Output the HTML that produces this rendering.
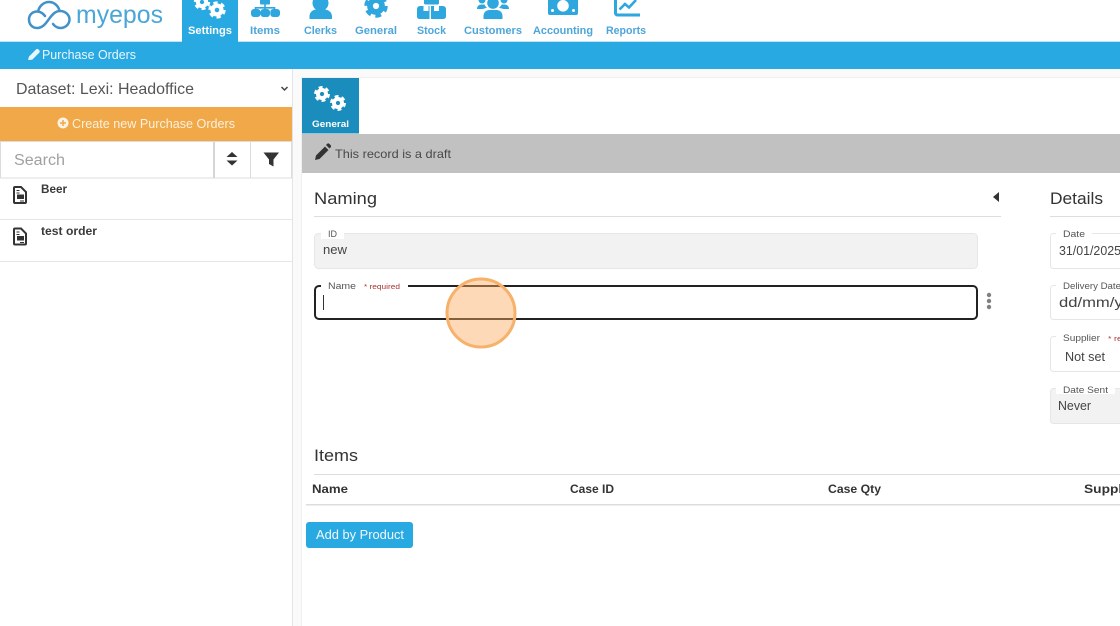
<!DOCTYPE html>
<html><head><meta charset="utf-8"><title>myepos</title>
<style>
html,body{margin:0;padding:0;background:#fff;width:1120px;height:626px;overflow:hidden}
svg{display:block;font-family:"Liberation Sans",sans-serif}
text{white-space:pre}
.nav{font-size:11px;font-weight:bold;fill:#4da6d9}
</style></head><body>
<svg width="1120" height="626" viewBox="0 0 1120 626" xmlns="http://www.w3.org/2000/svg">
<defs>
<g id="gear"><circle r="5.2" fill="none" stroke="currentColor" stroke-width="5"/><circle r="8.6" fill="none" stroke="currentColor" stroke-width="3.2" stroke-dasharray="5 4"/></g>
</defs>
<!-- backgrounds -->
<rect x="0" y="69" width="1120" height="557" fill="#fafafa"/>
<rect x="0" y="69" width="292" height="557" fill="#fff"/>
<rect x="292" y="69" width="1" height="557" fill="#e4e4e4"/>
<rect x="302" y="77" width="818" height="549" fill="#fff"/>
<rect x="302" y="77" width="818" height="1" fill="#f0f0f0"/>
<rect x="301" y="77" width="1" height="549" fill="#f0f0f0"/>
<!-- top bar -->
<rect x="0" y="41" width="1120" height="1" fill="#bfe3f5"/>
<rect x="0" y="42" width="1120" height="27" fill="#29a9e1"/>
<rect x="182" y="0" width="56" height="42" fill="#29a9e1"/>
<!-- logo -->
<g fill="none" stroke="#4391c9" stroke-width="2.500" stroke-linecap="round">
<path d="M59.500 10.500C58 5.500 54 2 49 2C44 2 39.500 5.500 38 11.500C33 11 29 14.500 29 19.500C29 24 32 28 37 28C43 28 46 23 49 19C52 15 55 11 60 11C65.500 11 69.500 15 69.500 19.500C69.500 24 65.500 28 60.500 28C57.500 28 55 26.500 53 24"/>
<path d="M38 11.500C41 12 43.500 14 45 16"/>
</g>
<text x="76" y="23" font-size="25" fill="#4ba6d8" textLength="87" lengthAdjust="spacingAndGlyphs">myepos</text>
<!-- settings icon -->
<g color="#fff"><use href="#gear" transform="translate(202,2) scale(.8)"/><use href="#gear" transform="translate(217,10) scale(.85)"/></g>
<text x="188" y="34" font-size="11" font-weight="bold" fill="#fff" textLength="44" lengthAdjust="spacingAndGlyphs">Settings</text>
<!-- items icon -->
<g fill="#2ea6de">
<rect x="260" y="-3" width="10" height="7.500" rx="1"/>
<path d="M264.200 4h1.600v3h9.500v3h-1.600v-1.400h-7.900v1.400h-1.600v-1.400h-7.900v1.400h-1.600v-3h9.500z"/>
<rect x="251" y="9" width="9.500" height="8" rx="3"/><rect x="260.500" y="9" width="9.500" height="8" rx="3"/><rect x="270.300" y="9" width="9.700" height="8" rx="3"/>
<!-- clerks -->
<circle cx="320.500" cy="3" r="8"/><path d="M309.500 19v-2.500c0-4.500 3.500-7 7-7h8c3.500 0 7.500 2.500 7.500 7V19z"/>
<!-- stock -->
<path d="M417 9a3 3 0 0 1 3-3h3.500v5h5V6h1v13h-10.500a2.500 2.500 0 0 1-2-2.500z"/>
<path d="M431 6h3v5h5V6h4a3 3 0 0 1 3 3v7.500a2.500 2.500 0 0 1-2.500 2.500H431z"/>
<rect x="424" y="-3" width="15" height="7.500" rx="1.500"/>
<!-- customers -->
<circle cx="493" cy="3" r="5.800"/><path d="M483.500 19v-3c0-3.500 2.500-6 6-6h7c3.500 0 6 2.500 6 6v3z"/>
<path d="M477 9c0-3 2-4.500 5-4.500h2.500c.5 1.500 1.500 2.500 2.500 3.200-2 .6-3.500 1-4.500 1.300z"/><path d="M509 9c0-3-2-4.500-5-4.500h-2.500c-.5 1.500-1.500 2.500-2.500 3.200 2 .6 3.500 1 4.500 1.300z"/>
<circle cx="482" cy="0" r="3.500"/><circle cx="504" cy="0" r="3.500"/>
<!-- accounting -->
<path fill-rule="evenodd" d="M550-5h26a2 2 0 0 1 2 2v16a2 2 0 0 1-2 2h-26a2 2 0 0 1-2-2V-3a2 2 0 0 1 2-2zM563 0a5.800 5.800 0 1 0 0 11.600a5.800 5.800 0 0 0 0-11.600z"/>
</g>
<circle cx="552.500" cy="10.500" r="1.500" fill="#fff"/><circle cx="573.500" cy="10.500" r="1.500" fill="#fff"/>
<!-- general -->
<g color="#2ea6de"><use href="#gear" transform="translate(376,6) scale(1.150)"/></g>
<!-- reports -->
<g fill="none" stroke="#2ea6de"><path d="M615.500-2v15a2 2 0 0 0 2 2h22.500" stroke-width="3"/><path d="M619.500 9.500l5.500-5.500 4 3.500 7-7.500" stroke-width="2.600"/></g>
<text class="nav" x="250" y="34" textLength="30" lengthAdjust="spacingAndGlyphs">Items</text>
<text class="nav" x="304" y="34" textLength="33" lengthAdjust="spacingAndGlyphs">Clerks</text>
<text class="nav" x="355" y="34" textLength="42" lengthAdjust="spacingAndGlyphs">General</text>
<text class="nav" x="417" y="34" textLength="29" lengthAdjust="spacingAndGlyphs">Stock</text>
<text class="nav" x="464" y="34" textLength="58" lengthAdjust="spacingAndGlyphs">Customers</text>
<text class="nav" x="533" y="34" textLength="60" lengthAdjust="spacingAndGlyphs">Accounting</text>
<text class="nav" x="606" y="34" textLength="40" lengthAdjust="spacingAndGlyphs">Reports</text>
<!-- sub bar -->
<path d="M28 60l1-3.500 7-7c.8-.8 1.800-.8 2.500 0l.7.700c.8.800.8 1.800 0 2.500l-7 7z" fill="#e8f6fd"/>
<text x="42" y="59" font-size="12.500" fill="#eaf7fd" textLength="94" lengthAdjust="spacingAndGlyphs">Purchase Orders</text>
<!-- left panel -->
<text x="16" y="94" font-size="16" fill="#555" textLength="178" lengthAdjust="spacingAndGlyphs">Dataset: Lexi: Headoffice</text>
<path d="M281.500 87l3 3 3-3" fill="none" stroke="#444" stroke-width="1.500"/>
<rect x="0" y="107" width="292" height="34" fill="#f0a848"/>
<circle cx="63" cy="123" r="5.500" fill="#fdf3e4"/><path d="M60 123h6M63 120v6" stroke="#f0a848" stroke-width="1.500"/>
<text x="72" y="128" font-size="12.500" fill="#fdf0dd" textLength="163" lengthAdjust="spacingAndGlyphs">Create new Purchase Orders</text>
<rect x=".5" y="141.500" width="291" height="36.500" fill="#fff" stroke="#dcdcdc"/>
<rect x="213" y="142" width="2" height="36" fill="#d6d6d6"/><rect x="250" y="142" width="1" height="36" fill="#dcdcdc"/>
<text x="14" y="165" font-size="15.500" fill="#a0a0a0" textLength="51" lengthAdjust="spacingAndGlyphs">Search</text>
<path d="M232 152l5.500 5h-11zM232 165.500l5.500-5h-11z" fill="#333"/>
<path d="M263.500 152.500h15.500l-5.500 7v7l-4.500-2.500v-4.500z" fill="#333"/>
<rect x="0" y="219" width="292" height="1" fill="#e6e6e6"/><rect x="0" y="261" width="292" height="1" fill="#e6e6e6"/>
<g fill="none" stroke="#333" stroke-width="2"><path d="M15 187h6l5 5v10a1 1 0 0 1-1 1H15a1 1 0 0 1-1-1V188a1 1 0 0 1 1-1z"/><path d="M16.500 190.500h3M16.500 193h3" stroke-width="1"/><rect x="17" y="194.500" width="7" height="4.500" fill="#333" stroke="none"/><path d="M20 201h4" stroke-width="1"/></g>
<g transform="translate(0,41.500)" fill="none" stroke="#333" stroke-width="2"><path d="M15 187h6l5 5v10a1 1 0 0 1-1 1H15a1 1 0 0 1-1-1V188a1 1 0 0 1 1-1z"/><path d="M16.500 190.500h3M16.500 193h3" stroke-width="1"/><rect x="17" y="194.500" width="7" height="4.500" fill="#333" stroke="none"/><path d="M20 201h4" stroke-width="1"/></g>
<text x="41" y="193" font-size="11.500" font-weight="bold" fill="#3a3a3a" textLength="26" lengthAdjust="spacingAndGlyphs">Beer</text>
<text x="41" y="235" font-size="11.500" font-weight="bold" fill="#3a3a3a" textLength="56" lengthAdjust="spacingAndGlyphs">test order</text>
<!-- tab -->
<rect x="302" y="78" width="57" height="55.500" fill="#1b8dbd"/>
<g color="#fff"><use href="#gear" transform="translate(322,94) scale(.78)"/><use href="#gear" transform="translate(338,103) scale(.78)"/></g>
<text x="312" y="127" font-size="9.500" font-weight="bold" fill="#fff" textLength="37" lengthAdjust="spacingAndGlyphs">General</text>
<!-- draft bar -->
<rect x="302" y="134" width="818" height="39" fill="#c1c1c1"/>
<path d="M315 160l1-4.500 9-9 3.500 3.500-9 9zM326 145l1-1c.8-.8 1.800-.8 2.500 0l1 1c.8.800.8 1.800 0 2.500l-1 1z" fill="#333"/>
<text x="335" y="158" font-size="12" fill="#484848" textLength="116" lengthAdjust="spacingAndGlyphs">This record is a draft</text>
<!-- naming -->
<text x="314" y="204" font-size="17" fill="#333" textLength="63" lengthAdjust="spacingAndGlyphs">Naming</text>
<rect x="314" y="216" width="687" height="1" fill="#ddd"/>
<path d="M993 197l6-5v10z" fill="#333"/>
<rect x="314.500" y="233.500" width="663" height="35" rx="4" fill="#f2f2f2" stroke="#e6e6e6"/>
<rect x="321" y="228" width="23" height="11" fill="#fff"/>
<text x="328" y="237" font-size="9.500" fill="#555" textLength="9" lengthAdjust="spacingAndGlyphs">ID</text>
<text x="323" y="254" font-size="12.500" fill="#444" textLength="24" lengthAdjust="spacingAndGlyphs">new</text>
<rect x="315" y="286" width="662" height="33" rx="4" fill="#fff" stroke="#222" stroke-width="2"/>
<rect x="321" y="282" width="87" height="9" fill="#fff"/>
<text x="328" y="289" font-size="9.500" fill="#555" textLength="28" lengthAdjust="spacingAndGlyphs">Name</text>
<text x="364" y="289" font-size="7.500" fill="#a33" textLength="36" lengthAdjust="spacingAndGlyphs">* required</text>
<rect x="323" y="295" width="1" height="15" fill="#333"/>
<circle cx="989" cy="295" r="2.200" fill="#808080"/><circle cx="989" cy="301" r="2.200" fill="#808080"/><circle cx="989" cy="307" r="2.200" fill="#808080"/>
<circle cx="481" cy="313" r="34" fill="#fbab60" fill-opacity=".45" stroke="#f6b26b" stroke-width="3"/>
<!-- details -->
<text x="1050" y="204" font-size="17" fill="#333" textLength="53" lengthAdjust="spacingAndGlyphs">Details</text>
<rect x="1050" y="216" width="70" height="1" fill="#ddd"/>
<rect x="1050.500" y="233.500" width="90" height="35" rx="3" fill="#fff" stroke="#e6e6e6"/>
<rect x="1056" y="228" width="36" height="11" fill="#fff"/>
<text x="1063" y="237" font-size="9.500" fill="#555" textLength="22" lengthAdjust="spacingAndGlyphs">Date</text>
<text x="1059" y="255" font-size="13" fill="#444" textLength="62" lengthAdjust="spacingAndGlyphs">31/01/2025</text>
<rect x="1050.500" y="285.500" width="90" height="34" rx="3" fill="#fff" stroke="#e6e6e6"/>
<rect x="1056" y="281" width="64" height="10" fill="#fff"/>
<text x="1063" y="289" font-size="9.500" fill="#555" textLength="58" lengthAdjust="spacingAndGlyphs">Delivery Date</text>
<text x="1059" y="307" font-size="14" fill="#444" textLength="72" lengthAdjust="spacingAndGlyphs">dd/mm/yy</text>
<rect x="1050.500" y="336.500" width="90" height="35" rx="3" fill="#fff" stroke="#e6e6e6"/>
<rect x="1056" y="332" width="64" height="10" fill="#fff"/>
<text x="1063" y="341" font-size="9.500" fill="#555" textLength="37" lengthAdjust="spacingAndGlyphs">Supplier</text>
<text x="1108" y="341" font-size="7.500" fill="#a33" textLength="14" lengthAdjust="spacingAndGlyphs">* re</text>
<text x="1065" y="361" font-size="12.500" fill="#444" textLength="40" lengthAdjust="spacingAndGlyphs">Not set</text>
<rect x="1050.500" y="388.500" width="90" height="35" rx="3" fill="#f2f2f2" stroke="#e6e6e6"/>
<rect x="1056" y="384" width="59" height="10" fill="#fff"/>
<text x="1063" y="393" font-size="9.500" fill="#555" textLength="45" lengthAdjust="spacingAndGlyphs">Date Sent</text>
<text x="1058" y="410" font-size="12.500" fill="#444" textLength="33" lengthAdjust="spacingAndGlyphs">Never</text>
<!-- items -->
<text x="314" y="461" font-size="17" fill="#333" textLength="44" lengthAdjust="spacingAndGlyphs">Items</text>
<rect x="314" y="474" width="806" height="1" fill="#ddd"/>
<text x="312" y="493" font-size="12" font-weight="bold" fill="#333" textLength="36" lengthAdjust="spacingAndGlyphs">Name</text>
<text x="570" y="493" font-size="12" font-weight="bold" fill="#333" textLength="44" lengthAdjust="spacingAndGlyphs">Case ID</text>
<text x="828" y="493" font-size="12" font-weight="bold" fill="#333" textLength="53" lengthAdjust="spacingAndGlyphs">Case Qty</text>
<text x="1084" y="493" font-size="12" font-weight="bold" fill="#333" textLength="55" lengthAdjust="spacingAndGlyphs">Supplier</text>
<rect x="306" y="504" width="814" height="1.500" fill="#ddd"/>
<rect x="306" y="522" width="107" height="26" rx="3" fill="#29a9e1"/>
<text x="316" y="539" font-size="12.500" fill="#f0f9fe" textLength="88" lengthAdjust="spacingAndGlyphs">Add by Product</text>
</svg>
</body></html>
